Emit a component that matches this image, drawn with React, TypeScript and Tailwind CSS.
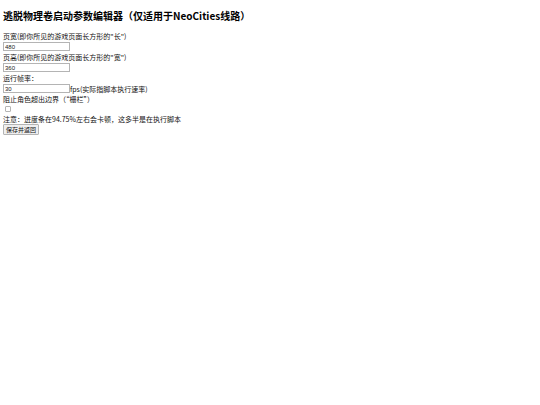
type NumberFieldProps = {
  id: string;
  label: string;
  value: string;
  suffix?: string;
};

function NumberField(props: NumberFieldProps) {
  const { id, label, value, suffix } = props;
  return (
    <div>
      <label htmlFor={id} className="block leading-[10px]">
        {label}
      </label>
      <div className="flex h-[11px] items-center">
        <input
          id={id}
          type="text"
          defaultValue={value}
          className="h-[9px] w-[67px] border border-[#b4b4b4] bg-white px-px font-['Liberation_Sans',sans-serif] text-[6px] leading-[7px] text-[#222222]"
        />
        {suffix && <span>{suffix}</span>}
      </div>
    </div>
  );
}

export default function App() {
  return (
    <main className="bg-white px-[3px] pt-2 font-['Noto_Sans_CJK_SC',sans-serif] text-[7px] leading-[10px] text-[#111111]">
      <h2 className="mb-2 text-[10px] font-bold leading-[15px] text-black">
        逃脱物理卷启动参数编辑器（仅适用于NeoCities线路）
      </h2>
      <form onSubmit={(e) => e.preventDefault()}>
        <NumberField id="width" label='页宽(即你所见的游戏页面长方形的"长")' value="480" />
        <NumberField id="height" label='页高(即你所见的游戏页面长方形的"宽")' value="360" />
        <NumberField id="fps" label="运行帧率：" value="30" suffix="fps(实际指脚本执行速率)" />
        <label htmlFor="fence" className="block">
          阻止角色超出边界（“栅栏”）
        </label>
        <div className="flex h-[10px] items-center px-[2px]">
          <input
            id="fence"
            type="checkbox"
            className="size-[6px] appearance-none rounded-[1px] border border-[#b4b4b4] bg-white checked:bg-[#0075ff]"
          />
        </div>
        <p>注意：进度条在94.75%左右会卡顿，这多半是在执行脚本</p>
        <button
          type="submit"
          className="block h-[11px] rounded-[1px] border border-[#b4b4b4] bg-[#efefef] px-[2px] text-[6px] leading-[9px]"
        >
          保存并返回
        </button>
      </form>
    </main>
  );
}
